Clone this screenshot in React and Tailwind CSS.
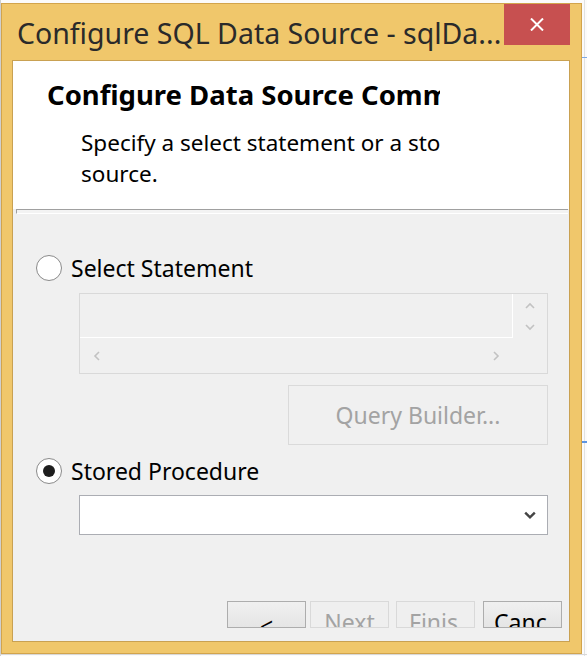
export default function App() {
  const Chevron = ({ dir, color = "#c2c2c2", size = 10, sw = 1.6 }) => {
    const paths = {
      up: "M1 7 L5 3 L9 7",
      down: "M1 3 L5 7 L9 3",
      left: "M7 1 L3 5 L7 9",
      right: "M3 1 L7 5 L3 9",
    };
    return (
      <svg width={size} height={size} viewBox="0 0 10 10" className="block">
        <path d={paths[dir]} fill="none" stroke={color} strokeWidth={sw} />
      </svg>
    );
  };

  return (
    <div className="relative w-[587px] h-[656px] overflow-hidden bg-[#fbfbfb] font-['Noto_Sans','Open_Sans',sans-serif]">
      {/* desktop decorations behind the window */}
      <div className="absolute left-0 top-0 w-px h-full bg-[#cfcfcf]" />
      <div className="absolute left-[584px] top-0 w-px h-full bg-[#e2e2e2]" />
      <div className="absolute left-[582px] top-[57px] w-[5px] h-px bg-[#7ea8e4]" />
      <div className="absolute left-[582px] top-[441px] w-[5px] h-[2px] bg-[#5c94e3]" />
      <div className="absolute left-0 top-[654px] w-full h-px bg-[#d8d8d8]" />

      {/* window */}
      <div className="relative ml-[1px] mt-[3px] w-[581px] h-[651px] bg-[#f0c76b] border border-[#d2a44c] flex flex-col">
        {/* title bar */}
        <div className="h-[56px] flex items-start">
          <div className="pl-[15px] pt-[12px] text-[28.5px] leading-[34px] text-[#2a2a2a] whitespace-nowrap">
            Configure SQL Data Source - sqlDa...
          </div>
          <div className="ml-auto mr-[11px] w-[66px] h-[41px] bg-[#c75050] flex items-center justify-center">
            <svg width="14" height="13" viewBox="0 0 14 13">
              <path d="M1 0.5 L13 12.5 M13 0.5 L1 12.5" stroke="#ffffff" strokeWidth="2" fill="none" />
            </svg>
          </div>
        </div>

        {/* content */}
        <div className="ml-[10px] w-[558px] h-[582px] border border-[#c9a152] bg-[#f0f0f0] flex flex-col overflow-hidden">
          {/* header */}
          <div className="h-[148px] bg-white">
            <div className="w-[427px] overflow-hidden">
              <div className="pl-[34px] pt-[18px] text-[27.5px] leading-[32px] font-bold text-black whitespace-nowrap">
                Configure Data Source Command
              </div>
              <div className="pl-[68px] pt-[16px] text-[22.5px] leading-[31px] text-black whitespace-nowrap">
                <div>Specify a select statement or a stored procedure to retrieve data from the data</div>
                <div>source.</div>
              </div>
            </div>
          </div>

          {/* separator */}
          <div className="ml-[3px] mr-[1px] h-[5px] border-t border-l border-[#a0a0a0] border-b border-b-white bg-[#f3f3f3]" />

          {/* body */}
          <div className="flex flex-col">
            <div className="mt-[41px] ml-[23px] flex items-center h-[26px]">
              <div className="w-[26px] h-[26px] rounded-full border border-[#8a8a8a] bg-white" />
              <div className="ml-[9px] text-[23px] leading-[26px] text-black">Select Statement</div>
            </div>

            {/* text box */}
            <div className="mt-[12px] ml-[66px] w-[469px] h-[81px] border border-[#d9d9d9] grid grid-cols-[1fr_34px] grid-rows-[44px_1fr]">
              <div className="border-r border-b border-white" />
              <div className="flex flex-col items-center justify-start pt-[7px] gap-[11px]">
                <Chevron dir="up" />
                <Chevron dir="down" />
              </div>
              <div className="flex items-center justify-between px-[12px]">
                <Chevron dir="left" />
                <Chevron dir="right" />
              </div>
              <div />
            </div>

            {/* query builder */}
            <div className="mt-[11px] ml-[275px] w-[260px] h-[60px] border border-[#dadada] flex items-center justify-center text-[23px] text-[#a3a3a3]">
              Query Builder...
            </div>

            <div className="mt-[13px] ml-[23px] flex items-center h-[26px]">
              <div className="w-[26px] h-[26px] rounded-full border border-[#8a8a8a] bg-white flex items-center justify-center">
                <div className="w-[12px] h-[12px] rounded-full bg-[#1e1e1e]" />
              </div>
              <div className="ml-[9px] text-[23px] leading-[26px] text-black">Stored Procedure</div>
            </div>

            {/* dropdown */}
            <div className="mt-[11px] ml-[66px] w-[469px] h-[40px] border border-[#abadb3] bg-white flex items-center justify-end pr-[11px]">
              <Chevron dir="down" color="#444444" size={12} sw={2} />
            </div>

            {/* wizard buttons */}
            <div className="mt-[66px] flex">
              <div className="ml-[214px] w-[79px] h-[27px] border border-[#adadad] bg-gradient-to-b from-[#f0f0f0] to-[#e5e5e5] overflow-hidden flex justify-center">
                <div className="pt-[11px] text-[23px] leading-[26px] text-black">&lt;</div>
              </div>
              <div className="ml-[4px] w-[79px] h-[27px] border border-[#d9d9d9] bg-[#efefef] overflow-hidden px-[12px]">
                <div className="pt-[7px] text-[23px] leading-[26px] text-[#a3a3a3] text-center whitespace-nowrap">Next</div>
              </div>
              <div className="ml-[7px] w-[79px] h-[27px] border border-[#d9d9d9] bg-[#efefef] overflow-hidden pl-[12px] pr-[16px]">
                <div className="overflow-hidden">
                  <div className="pt-[7px] text-[23px] leading-[26px] text-[#a3a3a3] whitespace-nowrap">Finish</div>
                </div>
              </div>
              <div className="ml-[8px] w-[79px] h-[27px] border border-[#adadad] bg-gradient-to-b from-[#f0f0f0] to-[#e5e5e5] overflow-hidden pl-[10px] pr-[14px]">
                <div className="overflow-hidden">
                  <div className="pt-[7px] text-[23px] leading-[26px] text-black whitespace-nowrap">Cancel</div>
                </div>
              </div>
            </div>
          </div>
        </div>
      </div>
    </div>
  );
}
